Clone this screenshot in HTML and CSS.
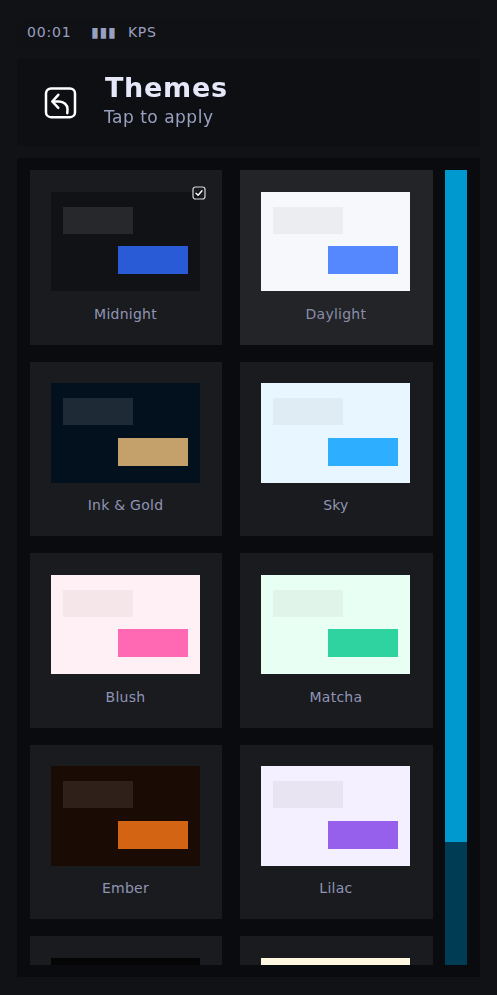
FILE: index.html
```html
<!DOCTYPE html>
<html lang="en">
<head>
<meta charset="utf-8">
<title>Themes</title>
<link rel="stylesheet" href="styles.css">
</head>
<body>
<main class="app">
  <div class="status"><span>00:01</span><span class="bars">▮▮▮</span><span>KPS</span></div>
  <header class="header">
    <button class="back" aria-label="Back">
      <svg viewBox="0 0 33 32" width="33" height="32" fill="none" stroke="#fff" stroke-width="2.5" stroke-linecap="round" stroke-linejoin="round">
        <rect x="2" y="1.5" width="29" height="28.7" rx="5"/>
        <path d="M14.3 7.8 8.3 14.5l6 6.3"/>
        <path d="M8.8 14.5H15c5 0 8.5 3.5 8.5 7.5 0 1.5-.1 3-.2 4.2"/>
      </svg>
    </button>
    <div class="heading">
      <h1>Themes</h1>
      <p>Tap to apply</p>
    </div>
  </header>
  <section class="panel">
    <div class="list">
      <div class="grid">
        <article class="card">
          <div class="preview midnight">
            <span class="block top"></span><span class="block accent"></span>
          </div>
          <svg class="check" viewBox="0 0 14 14" width="14" height="14" fill="none" stroke="#d8d8dc">
            <rect x="1" y="1" width="12" height="12" rx="2.5" stroke-width="1.2"/>
            <path d="M4 7.3 6.1 9.3 10 4.8" stroke="#fff" stroke-width="1.4" stroke-linecap="round" stroke-linejoin="round"/>
          </svg>
          <div class="label">Midnight</div>
        </article>
        <article class="card hover">
          <div class="preview daylight"><span class="block top"></span><span class="block accent"></span></div>
          <div class="label dim">Daylight</div>
        </article>
        <article class="card">
          <div class="preview ink"><span class="block top"></span><span class="block accent"></span></div>
          <div class="label">Ink &amp; Gold</div>
        </article>
        <article class="card">
          <div class="preview sky"><span class="block top"></span><span class="block accent"></span></div>
          <div class="label">Sky</div>
        </article>
        <article class="card">
          <div class="preview blush"><span class="block top"></span><span class="block accent"></span></div>
          <div class="label">Blush</div>
        </article>
        <article class="card">
          <div class="preview matcha"><span class="block top"></span><span class="block accent"></span></div>
          <div class="label">Matcha</div>
        </article>
        <article class="card">
          <div class="preview ember"><span class="block top"></span><span class="block accent"></span></div>
          <div class="label">Ember</div>
        </article>
        <article class="card">
          <div class="preview lilac"><span class="block top"></span><span class="block accent"></span></div>
          <div class="label">Lilac</div>
        </article>
        <article class="card">
          <div class="preview noir"><span class="block top"></span><span class="block accent"></span></div>
        </article>
        <article class="card">
          <div class="preview cream"><span class="block top"></span><span class="block accent"></span></div>
        </article>
      </div>
    </div>
    <div class="scrollbar"><div class="thumb"></div></div>
  </section>
</main>
</body>
</html>
```
FILE: styles.css
```css
* { box-sizing: border-box; }
html, body { margin: 0; height: 100%; background: #101216; }
body { font-family: "DejaVu Sans", sans-serif; overflow: hidden; }
.app {
  height: 995px;
  padding: 18px 17px 18px;
  display: flex;
  flex-direction: column;
  gap: 11px;
  transform: translateZ(0);
}
.status {
  height: 30px;
  flex: none;
  display: flex;
  align-items: center;
  gap: 11px;
  padding: 0 10px 2px;
  background: #0f1114;
  color: #9aa0c0;
  font-size: 14px;
  letter-spacing: 0.8px;
}
.status .bars { margin-left: 9px; }
.header {
  height: 87px;
  flex: none;
  display: flex;
  align-items: center;
  gap: 28px;
  padding: 0 28px 0 27px;
  background: #0d0f12;
}
.back {
  width: 33px;
  height: 32px;
  padding: 0;
  background: none;
  border: 0;
  display: block;
}
.back svg { display: block; }
.heading { display: flex; flex-direction: column; padding-bottom: 4px; }
h1 {
  margin: 0;
  font-size: 27px;
  line-height: 32px;
  font-weight: 700;
  letter-spacing: 0.7px;
  color: #e6e8fa;
}
.heading p {
  margin: 1px 0 0 -1px;
  font-size: 17px;
  line-height: 24px;
  letter-spacing: 0.5px;
  color: #9aa0c0;
}
.panel {
  flex: 1;
  min-height: 0;
  margin-top: 1px;
  display: flex;
  gap: 12px;
  padding: 12px 13px 12px 13px;
  background: #0a0b0e;
}
.list { flex: 1; min-width: 0; overflow: hidden; }
.grid {
  display: grid;
  grid-template-columns: repeat(2, 192.4px);
  column-gap: 18px;
  row-gap: 16.85px;
}
.card {
  position: relative;
  height: 174.7px;
  padding: 21.7px 22.4px 0 21px;
  background: #191b1f;
}
.card.hover { background: #222428; }
.preview {
  position: relative;
  height: 99.3px;
  background: var(--bg);
}
.block { position: absolute; width: 70px; background: var(--fill); }
.block.top { left: 12px; top: 15px; height: 27px; background: var(--soft); }
.block.accent { right: 12px; top: 54.3px; height: 28px; background: var(--fill); }
.check { position: absolute; top: 16px; right: 16.4px; }
.label {
  margin-top: 13.8px;
  text-align: center;
  font-size: 14px;
  line-height: 18px;
  letter-spacing: 0.25px;
  color: #9094b4;
}
.label.dim { color: #8a8da8; }
.midnight { --bg: #101216; --soft: #26282c; --fill: #2a5bd7; }
.daylight { --bg: #f6f8fc; --soft: #ecedf1; --fill: #5588ff; }
.ink { --bg: #03111f; --soft: #1e2a36; --fill: #c4a06a; }
.sky { --bg: #e8f6ff; --soft: #e0ecf3; --fill: #2eaeff; }
.blush { --bg: #fff0f5; --soft: #f5e6ea; --fill: #ff69b4; }
.matcha { --bg: #e8fff3; --soft: #e0f4ea; --fill: #2fd3a0; }
.ember { --bg: #1a0c04; --soft: #2f211a; --fill: #d26414; }
.lilac { --bg: #f4f0ff; --soft: #e8e4f2; --fill: #965fec; }
.noir { --bg: #050505; --soft: #1c1c1c; --fill: #888888; }
.cream { --bg: #fff8e1; --soft: #f2ecd6; --fill: #d4a017; }
.scrollbar {
  flex: none;
  width: 22px;
  background: #003c53;
}
.thumb { height: 672px; background: #0099cf; }
```
